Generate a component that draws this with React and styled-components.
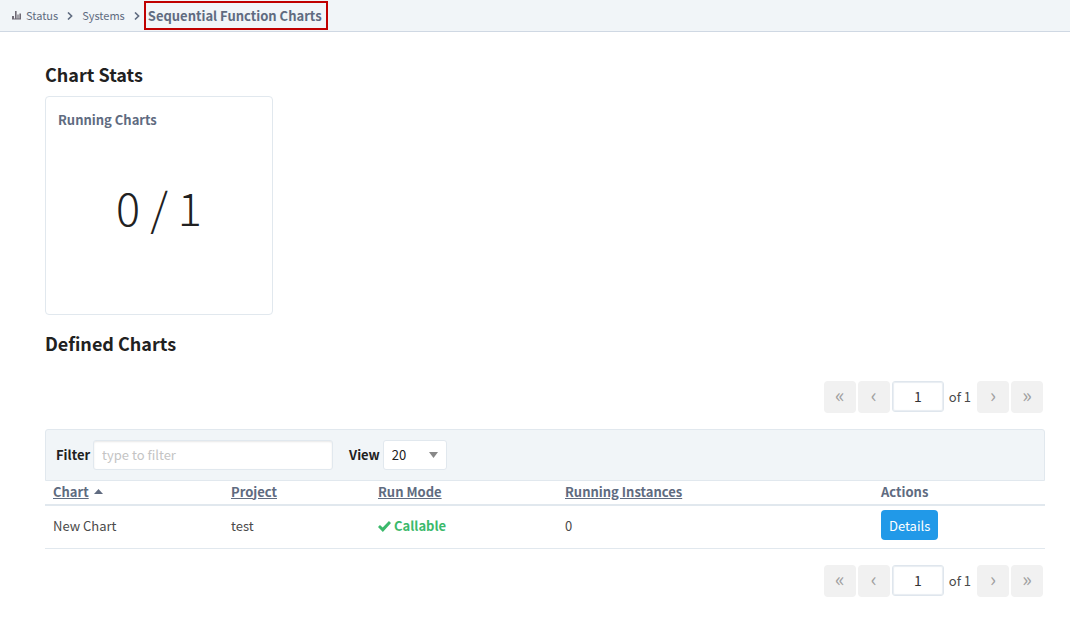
import { useState } from "react";
import styled, { createGlobalStyle } from "styled-components";

const GlobalStyle = createGlobalStyle`
  * {
    box-sizing: border-box;
  }
  body {
    margin: 0;
    background-color: #ffffff;
    color: #4a4a4a;
    font-family: "Noto Sans CJK SC", sans-serif;
    font-size: 13px;
    line-height: 20px;
  }
  input, select, button {
    font-family: inherit;
  }
`;

const Breadcrumb = styled.nav`
  display: flex;
  align-items: center;
  height: 32px;
  padding-left: 12px;
  background-color: #f1f5f8;
  border-bottom: 1px solid #cfd8e3;
`;

const Crumb = styled.a`
  display: flex;
  align-items: center;
  gap: 5px;
  color: #5f6b7f;
  font-size: 11px;
  line-height: 18px;
  padding-bottom: 1px;
  text-decoration: none;
`;

const Separator = styled.svg`
  width: 6px;
  height: 8px;
  margin: 0 9px;
  fill: none;
  stroke: #5f6b7f;
  stroke-width: 1.6;
`;

const Current = styled.span`
  display: flex;
  align-items: center;
  height: 29px;
  margin-left: -5px;
  padding: 0 4px 0 2px;
  border: 2px solid #c00000;
  color: #606b80;
  font-weight: 700;
`;

const Content = styled.main`
  padding: 30px 25px 0 45px;
`;

const Heading = styled.h2`
  margin: 0;
  padding-bottom: 2px;
  color: #212121;
  font-size: 18px;
  font-weight: 700;
  line-height: 24px;
`;

const Card = styled.section`
  display: flex;
  flex-direction: column;
  width: 228px;
  height: 219px;
  margin: 8px 0 16px;
  padding: 13px 12px;
  border: 1px solid #e1e8ee;
  border-radius: 4px;
`;

const CardTitle = styled.h3`
  margin: 0;
  color: #606b80;
  font-size: 13px;
  font-weight: 700;
`;

const CardValue = styled.div`
  padding-top: 42px;
  color: #212121;
  font-size: 45px;
  font-weight: 200;
  line-height: 70px;
  text-align: center;
`;

const Pager = styled.div`
  display: flex;
  align-items: flex-start;
  justify-content: flex-end;
  gap: 2px;
  padding-right: 2px;
`;

const PageButton = styled.button`
  width: 32px;
  height: 32px;
  padding: 0 0 4px;
  border: none;
  border-radius: 4px;
  background-color: #f1f1f1;
  color: #a0a0a0;
  font-size: 20px;
  line-height: 28px;
`;

const PageInput = styled.input`
  width: 52px;
  height: 31px;
  padding: 0 0 2px;
  border: 1px solid #dfe6ed;
  border-radius: 3px;
  box-shadow: inset 0 0 1px 1px #e8edf2;
  color: #333333;
  font-size: 14px;
  text-align: center;
`;

const PageCount = styled.span`
  padding: 0 4px 0 3px;
  line-height: 32px;
`;

const FilterBar = styled.div`
  display: flex;
  align-items: center;
  height: 52px;
  margin-top: 16px;
  padding: 0 10px;
  border: 1px solid #e1e8ee;
  border-radius: 3px 3px 0 0;
  background-color: #f1f5f8;
`;

const Label = styled.label`
  margin-right: 3px;
  color: #212121;
  font-weight: 700;
`;

const FilterInput = styled.input`
  width: 240px;
  height: 30px;
  margin-right: 16px;
  padding: 0 8px 2px;
  border: 1px solid #e1e8ee;
  border-radius: 3px;
  box-shadow: inset 0 1px 2px #e8e8e8;
  font-size: 13px;
  &::placeholder {
    color: #c4c4c4;
  }
`;

const SelectBox = styled.div`
  position: relative;
`;

const Select = styled.select`
  display: block;
  width: 64px;
  height: 30px;
  padding: 0 8px 2px;
  border: 1px solid #e1e8ee;
  border-radius: 3px;
  background-color: #ffffff;
  color: #212121;
  font-size: 13px;
  appearance: none;
`;

const SelectArrow = styled.svg`
  position: absolute;
  top: 12px;
  right: 9px;
  width: 9px;
  height: 6px;
  fill: #888888;
  pointer-events: none;
`;

const Table = styled.table`
  width: 100%;
  margin-bottom: 16px;
  border-collapse: separate;
  border-spacing: 0;
  table-layout: fixed;
`;

const HeadCell = styled.th`
  width: ${(props) => props.$width};
  height: 25px;
  padding: 0 8px 2px;
  border-bottom: 2px solid #e1e8ee;
  color: #606b80;
  font-weight: 700;
  text-align: left;
`;

const SortLink = styled.a`
  color: inherit;
  text-decoration: underline;
`;

const SortArrow = styled.svg`
  width: 9px;
  height: 5px;
  margin-left: 5px;
  fill: #606b80;
  vertical-align: 3px;
`;

const Cell = styled.td`
  height: 43px;
  padding: 0 8px 2px;
  border-bottom: 1px solid #e1e8ee;
`;

const Mode = styled.span`
  display: flex;
  align-items: center;
  gap: 3px;
  color: #3bb96b;
  font-weight: 700;
`;

const DetailsButton = styled.button`
  display: block;
  height: 30px;
  margin-bottom: 2px;
  padding: 0 8px;
  border: none;
  border-radius: 4px;
  background-color: #2199e8;
  color: #ffffff;
  font-size: 13px;
`;

const Spacer = styled.div`
  height: 24px;
`;

const columns = [
  { title: "Chart", width: "17.8%", sortable: true, sorted: true },
  { title: "Project", width: "14.7%", sortable: true },
  { title: "Run Mode", width: "18.7%", sortable: true },
  { title: "Running Instances", width: "31.6%", sortable: true },
  { title: "Actions", width: "17.2%" },
];

const charts = [{ name: "New Chart", project: "test", mode: "Callable", running: 0 }];

const StatusIcon = () => (
  <svg width="9" height="9" viewBox="0 0 9 9" fill="#6f6a75">
    <path d="M0 5h2v3H0zM3 0h1.6v8H3zM5.4 3.5h1.2V8H5.4zM7.4 2.5H9V8H7.4zM0 7.4h9V8.4H0z" />
  </svg>
);

const CheckIcon = () => (
  <svg width="13" height="11" viewBox="0 0 12 10" fill="#3bb96b">
    <path d="M0 5.4 1.8 3.6 4.3 6 10.1 0 12 1.8 4.5 10z" />
  </svg>
);

const Chevron = () => (
  <Separator viewBox="0 0 6 8">
    <path d="M1 0.5 4.6 4 1 7.5" />
  </Separator>
);

const Pagination = () => {
  const [page, setPage] = useState("1");
  return (
    <Pager>
      <PageButton aria-label="First page">«</PageButton>
      <PageButton aria-label="Previous page">‹</PageButton>
      <PageInput aria-label="Page" value={page} onChange={(e) => setPage(e.target.value)} />
      <PageCount>of 1</PageCount>
      <PageButton aria-label="Next page">›</PageButton>
      <PageButton aria-label="Last page">»</PageButton>
    </Pager>
  );
};

const App = () => {
  return (
    <>
      <GlobalStyle />
      <Breadcrumb>
        <Crumb href="#status">
          <StatusIcon />
          Status
        </Crumb>
        <Chevron />
        <Crumb href="#systems">Systems</Crumb>
        <Chevron />
        <Current>Sequential Function Charts</Current>
      </Breadcrumb>
      <Content>
        <Heading>Chart Stats</Heading>
        <Card>
          <CardTitle>Running Charts</CardTitle>
          <CardValue>0 / 1</CardValue>
        </Card>
        <Heading>Defined Charts</Heading>
        <Spacer />
        <Pagination />
        <FilterBar>
          <Label htmlFor="filter">Filter</Label>
          <FilterInput id="filter" placeholder="type to filter" />
          <Label htmlFor="view">View</Label>
          <SelectBox>
            <Select id="view" defaultValue="20">
              <option>20</option>
              <option>50</option>
              <option>100</option>
            </Select>
            <SelectArrow viewBox="0 0 9 6">
              <path d="M0 0h9L4.5 6z" />
            </SelectArrow>
          </SelectBox>
        </FilterBar>
        <Table>
          <thead>
            <tr>
              {columns.map((column) => (
                <HeadCell key={column.title} $width={column.width}>
                  {column.sortable ? <SortLink href="#sort">{column.title}</SortLink> : column.title}
                  {column.sorted && (
                    <SortArrow viewBox="0 0 9 5">
                      <path d="M0 5h9L4.5 0z" />
                    </SortArrow>
                  )}
                </HeadCell>
              ))}
            </tr>
          </thead>
          <tbody>
            {charts.map((chart) => (
              <tr key={chart.name}>
                <Cell>{chart.name}</Cell>
                <Cell>{chart.project}</Cell>
                <Cell>
                  <Mode>
                    <CheckIcon />
                    {chart.mode}
                  </Mode>
                </Cell>
                <Cell>{chart.running}</Cell>
                <Cell>
                  <DetailsButton>Details</DetailsButton>
                </Cell>
              </tr>
            ))}
          </tbody>
        </Table>
        <Pagination />
      </Content>
    </>
  );
};

export default App;
